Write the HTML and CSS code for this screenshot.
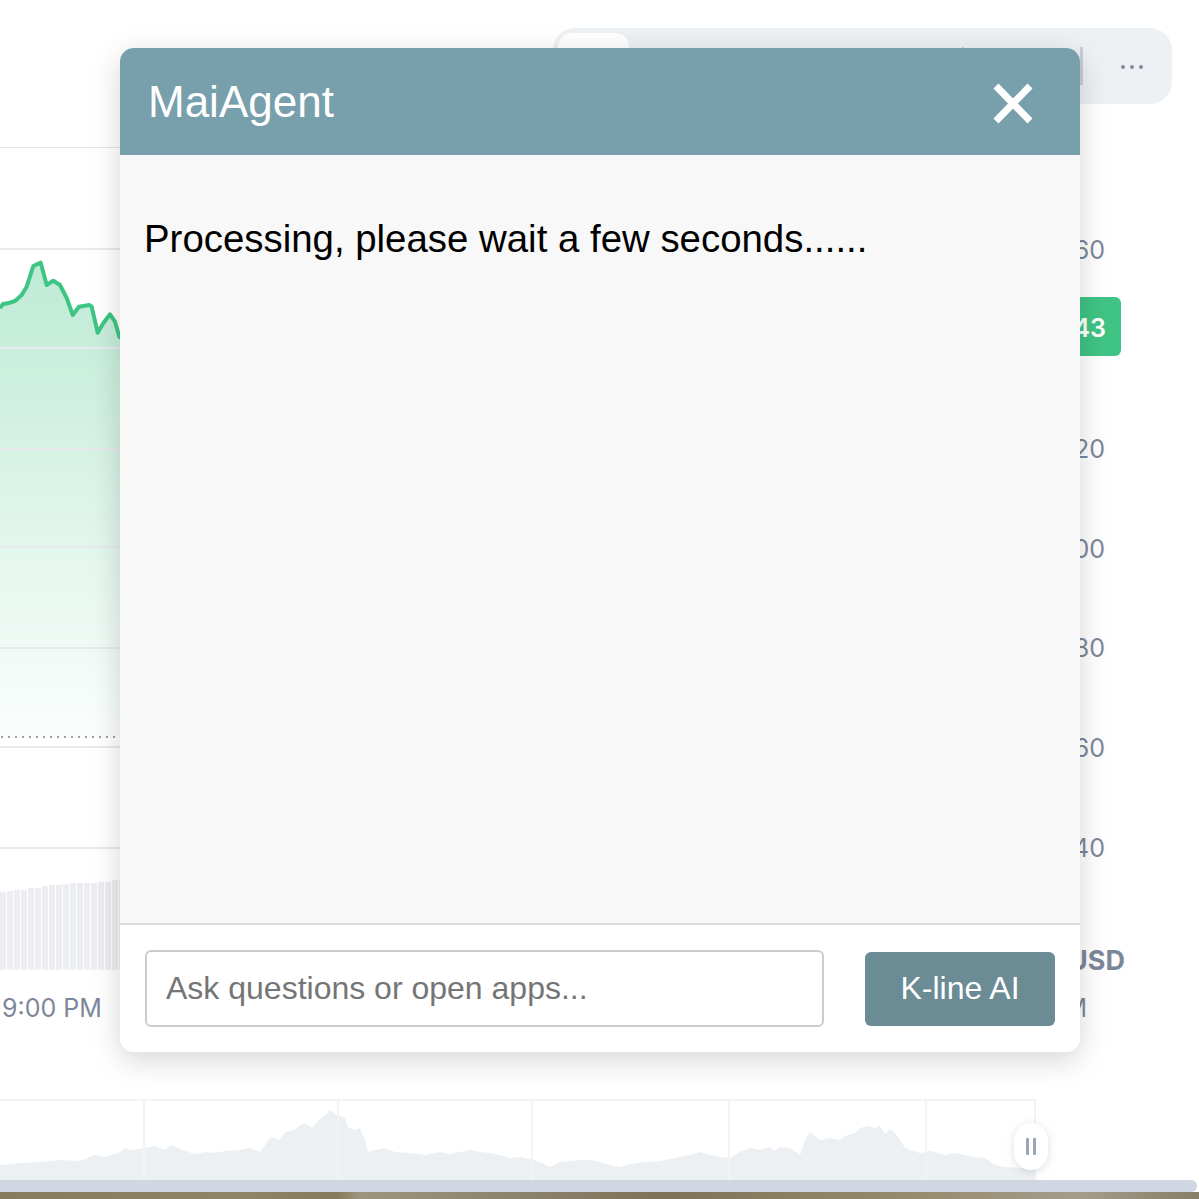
FILE: index.html
```html
<!DOCTYPE html>
<html lang="en">
<head>
<meta charset="utf-8">
<title>MaiAgent</title>
<link rel="stylesheet" href="styles.css">
</head>
<body>
<div class="page">
  <div class="top">
    <div class="toolbar">
      <div class="tab"></div>
      <div class="tb-spacer"></div>
      <div class="tb-divider short"></div>
      <div class="tb-gap"></div>
      <div class="tb-divider"></div>
      <div class="dots"><span></span><span></span><span></span></div>
    </div>
  </div>

  <div class="main">
    <div class="plot-col">
      <svg class="plot" width="1060" height="838" viewBox="0 147 1060 838">
        <defs>
          <linearGradient id="fillg" x1="0" y1="0" x2="0" y2="1">
            <stop offset="0" stop-color="#40c484" stop-opacity="0.34"/>
            <stop offset="1" stop-color="#40c484" stop-opacity="0.02"/>
          </linearGradient>
        </defs>
        <line x1="0" y1="147" x2="1060" y2="147" class="grid-top"/>
        <path class="area" d="M0,308 L3,304 L10,302.7 L15,301 L21.7,295 L26.7,286.7 L33.3,266 L40.7,262.7 L46.7,285 L53.3,280.7 L60,285 L66.7,298 L72.7,315 L79,306.7 L89.3,305 L91.7,306.7 L97.7,332.7 L103.3,323.3 L110,314.3 L115,321.7 L119.3,336.7 L140,350 L200,320 L300,340 L400,300 L500,330 L600,310 L700,345 L800,320 L900,335 L1000,318 L1060,327 L1060,737 L0,737 Z"/>
        <g class="grid">
          <line x1="0" y1="249" x2="1060" y2="249"/>
          <line x1="0" y1="348" x2="1060" y2="348"/>
          <line x1="0" y1="449" x2="1060" y2="449"/>
          <line x1="0" y1="547" x2="1060" y2="547"/>
          <line x1="0" y1="648" x2="1060" y2="648"/>
          <line x1="0" y1="747" x2="1060" y2="747"/>
          <line x1="0" y1="848" x2="1060" y2="848"/>
        </g>
        <path class="price" d="M0,308 L3,304 L10,302.7 L15,301 L21.7,295 L26.7,286.7 L33.3,266 L40.7,262.7 L46.7,285 L53.3,280.7 L60,285 L66.7,298 L72.7,315 L79,306.7 L89.3,305 L91.7,306.7 L97.7,332.7 L103.3,323.3 L110,314.3 L115,321.7 L119.3,336.7 L140,350 L200,320 L300,340 L400,300 L500,330 L600,310 L700,345 L800,320 L900,335 L1000,318 L1060,327"/>
        <line class="prev" x1="1" y1="737" x2="1060" y2="737"/>
        <g class="vol">
          <rect x="0" y="892" width="6" height="78"/>
          <rect x="7" y="891" width="6" height="79"/>
          <rect x="14" y="890" width="6" height="80"/>
          <rect x="21" y="890" width="6" height="80"/>
          <rect x="28" y="888" width="6" height="82"/>
          <rect x="35" y="888" width="6" height="82"/>
          <rect x="42" y="886" width="6" height="84"/>
          <rect x="49" y="885" width="6" height="85"/>
          <rect x="56" y="885" width="6" height="85"/>
          <rect x="63" y="884" width="6" height="86"/>
          <rect x="70" y="883" width="6" height="87"/>
          <rect x="77" y="883" width="6" height="87"/>
          <rect x="84" y="883" width="6" height="87"/>
          <rect x="91" y="883" width="6" height="87"/>
          <rect x="98" y="882" width="6" height="88"/>
          <rect x="105" y="882" width="6" height="88"/>
          <rect x="112" y="880" width="6" height="90"/>
          <rect x="119" y="880" width="6" height="90"/>
        </g>
      </svg>
      <div class="time-row">
        <span class="time">9:00 PM</span>
      </div>
    </div>
    <div class="axis">
      <div class="tick">2,560</div>
      <div class="tick"></div>
      <div class="tick">2,520</div>
      <div class="tick">2,500</div>
      <div class="tick">2,480</div>
      <div class="tick">2,460</div>
      <div class="tick">2,440</div>
      <div class="unit">USD</div>
      <div class="time-end">AM</div>
      <div class="badge">2,543</div>
    </div>
  </div>

  <div class="navigator">
    <svg class="nav" width="1036" height="81" viewBox="0 1099 1036 81">
      <path class="nav-area" d="M0,1180 L0,1165 L20,1163 L40,1162 L60,1160 L80,1161 L95,1155 L105,1157 L120,1152 L125,1148 L130,1150 L145,1148 L155,1146 L165,1150 L172,1145 L185,1151 L195,1154 L205,1152 L215,1153 L225,1151 L240,1150 L250,1148 L260,1152 L265,1145 L270,1137 L280,1140 L285,1132 L295,1130 L300,1125 L305,1123 L312,1128 L318,1121 L325,1115 L330,1110 L337,1115 L345,1118 L348,1127 L355,1130 L360,1128 L365,1140 L368,1152 L375,1150 L385,1148 L395,1152 L410,1153 L425,1155 L440,1152 L450,1154 L460,1152 L470,1150 L480,1152 L490,1153 L500,1155 L510,1158 L520,1157 L530,1159 L540,1162 L550,1167 L560,1162 L570,1161 L580,1160 L590,1160 L600,1162 L610,1165 L620,1167 L630,1164 L645,1162 L660,1161 L670,1159 L680,1157 L690,1155 L700,1152 L710,1155 L720,1157 L730,1158 L740,1152 L750,1148 L760,1150 L770,1147 L775,1151 L780,1147 L790,1148 L800,1155 L805,1140 L810,1132 L815,1136 L820,1140 L830,1138 L840,1140 L845,1136 L855,1133 L860,1128 L868,1126 L875,1128 L880,1126 L885,1134 L890,1129 L895,1133 L900,1140 L905,1148 L910,1150 L920,1153 L930,1151 L935,1152 L945,1155 L955,1153 L965,1155 L975,1157 L985,1158 L995,1165 L1005,1167 L1020,1168 L1036,1168 L1036,1180 Z"/>
      <g class="nav-grid">
        <line x1="0" y1="1100" x2="1036" y2="1100"/>
        <line x1="144" y1="1100" x2="144" y2="1180"/>
        <line x1="338" y1="1100" x2="338" y2="1180"/>
        <line x1="532" y1="1100" x2="532" y2="1180"/>
        <line x1="729" y1="1100" x2="729" y2="1180"/>
        <line x1="926" y1="1100" x2="926" y2="1180"/>
        <line x1="1035" y1="1100" x2="1035" y2="1180"/>
      </g>
    </svg>
    <div class="handle"><span></span><span></span></div>
  </div>
  <div class="scrollbar"></div>
  <div class="strip"></div>

  <div class="dialog">
    <div class="dlg-header">
      <div class="dlg-title">MaiAgent</div>
      <button class="dlg-close" aria-label="Close">
        <svg width="40" height="41" viewBox="0 0 40 41"><path d="M3,3 L37,38 M37,3 L3,38" stroke="#ffffff" stroke-width="7" fill="none"/></svg>
      </button>
    </div>
    <div class="dlg-body">
      <p class="dlg-msg">Processing, please wait a few seconds......</p>
    </div>
    <div class="dlg-footer">
      <input class="dlg-input" type="text" placeholder="Ask questions or open apps...">
      <button class="dlg-btn">K-line AI</button>
    </div>
  </div>
</div>
</body>
</html>
```

FILE: styles.css
```css
* { box-sizing: border-box; }
html, body { margin: 0; padding: 0; background: #ffffff; }
body { font-family: "Liberation Sans", Arial, sans-serif; }

.page {
  position: relative;
  width: 1199px;
  height: 1199px;
  overflow: hidden;
  background: #ffffff;
}

/* top toolbar */
.top { height: 147px; padding-top: 28px; padding-left: 553px; }
.toolbar {
  width: 619px;
  height: 76px;
  background: #eef1f4;
  border-radius: 22px;
  display: flex;
  align-items: center;
  padding: 5px;
}
.tab {
  width: 71px;
  height: 66px;
  background: #ffffff;
  border-radius: 14px;
  align-self: flex-start;
}
.tb-spacer { width: 333px; }
.tb-divider { width: 3px; height: 38px; background: #c8cfd8; align-self: flex-start; margin-top: 14px; }
.tb-divider.short { height: 6px; width: 2px; }
.tb-gap { width: 116px; }
.dots { display: flex; gap: 5px; margin-left: 38px; margin-top: 2px; }
.dots span { width: 4px; height: 4px; border-radius: 50%; background: #808a9c; }

/* main chart */
.main { display: flex; height: 952px; }
.plot-col { width: 1060px; display: flex; flex-direction: column; }
.plot { display: block; }
.grid-top { stroke: #e6e6e6; stroke-width: 2; }
.grid line { stroke: #e7e9ec; stroke-width: 2; }
.area { fill: url(#fillg); }
.price { fill: none; stroke: #3ec583; stroke-width: 4; stroke-linejoin: round; }
.prev { stroke: #9aa2ae; stroke-width: 2; stroke-dasharray: 2 5; }
.vol rect { fill: #eceef2; }

.time-row { height: 45px; display: flex; align-items: center; padding-left: 2px; }
.time { font-family: Inter, "Liberation Sans", sans-serif; font-size: 25px; color: #7d879a; }

.axis {
  position: relative;
  width: 139px;
  padding-top: 54px;
  padding-right: 94px;
  display: flex;
  flex-direction: column;
  align-items: flex-end;
  font-family: Inter, "Liberation Sans", sans-serif;
  color: #7d879a;
}
.tick { height: 99.6px; line-height: 99.6px; font-size: 25px; white-space: nowrap; }
.unit { margin-top: 48px; line-height: 30px; font-size: 27px; font-weight: 700; white-space: nowrap; margin-right: -20px; }
.time-end { margin-top: 17px; line-height: 30px; font-size: 25px; white-space: nowrap; margin-right: 18px; }

.badge {
  position: absolute;
  right: 78px;
  top: 150px;
  height: 59px;
  padding: 3px 15px 0 12px;
  background: #40c484;
  color: #ffffff;
  border-radius: 6px;
  font-size: 25px;
  font-weight: 600;
  line-height: 56px;
  white-space: nowrap;
}

/* navigator */
.navigator { position: relative; height: 81px; display: flex; }
.nav { display: block; }
.nav-area { fill: #edf0f3; }
.nav-grid line { stroke: #f1f3f5; stroke-width: 2; }
.handle {
  position: absolute;
  left: 1014px;
  top: 24px;
  width: 34px;
  height: 47px;
  background: #ffffff;
  border-radius: 17px;
  box-shadow: 0 2px 8px rgba(120, 130, 150, 0.25);
  display: flex;
  justify-content: center;
  align-items: center;
  gap: 4px;
}
.handle span { width: 3px; height: 17px; background: #9aa5b8; border-radius: 1px; }

.scrollbar {
  width: 1197px;
  height: 12px;
  background: #d0d7e3;
  border-radius: 0 6px 6px 0;
}
.strip {
  height: 7px;
  background: linear-gradient(90deg, #867b5c 0%, #8f8466 20%, #857a5b 28%, #9d957e 30%, #7c7359 55%, #958a6b 75%, #a39d8a 90%, #877f66 100%);
}

/* dialog */
.dialog {
  position: absolute;
  left: 120px;
  top: 48px;
  width: 960px;
  height: 1004px;
  border-radius: 14px;
  overflow: hidden;
  background: #ffffff;
  box-shadow: 0 8px 30px rgba(0, 0, 0, 0.17);
  display: flex;
  flex-direction: column;
}
.dlg-header {
  height: 107px;
  flex: none;
  background: #789fac;
  display: flex;
  align-items: center;
  justify-content: space-between;
  padding: 0 47px 0 28px;
}
.dlg-title {
  color: #ffffff;
  font-size: 44px;
  line-height: 50px;
}
.dlg-close {
  border: 0;
  background: none;
  padding: 0;
  width: 40px;
  height: 41px;
  margin-top: 4px;
  display: block;
  cursor: pointer;
}
.dlg-close svg { display: block; }
.dlg-body {
  flex: 1;
  background: #f8f8f8;
  padding: 62px 24px 0;
  border-bottom: 2px solid #dddddd;
}
.dlg-msg {
  margin: 0;
  font-size: 38.4px;
  line-height: 44px;
  color: #000000;
}
.dlg-footer {
  flex: none;
  display: flex;
  align-items: center;
  padding: 25px 25px 25px 25px;
  gap: 41px;
  background: #ffffff;
}
.dlg-input {
  width: 679px;
  height: 77px;
  border: 2px solid #cccccc;
  border-radius: 6px;
  padding: 0 19px;
  font-family: "Liberation Sans", Arial, sans-serif;
  font-size: 32px;
  color: #333333;
  background: #ffffff;
  outline: none;
}
.dlg-input::placeholder { color: #757575; }
.dlg-btn {
  width: 190px;
  height: 74px;
  border: 0;
  border-radius: 6px;
  background: #6b8b95;
  color: #ffffff;
  font-family: "Liberation Sans", Arial, sans-serif;
  font-size: 32px;
  cursor: pointer;
}
```
